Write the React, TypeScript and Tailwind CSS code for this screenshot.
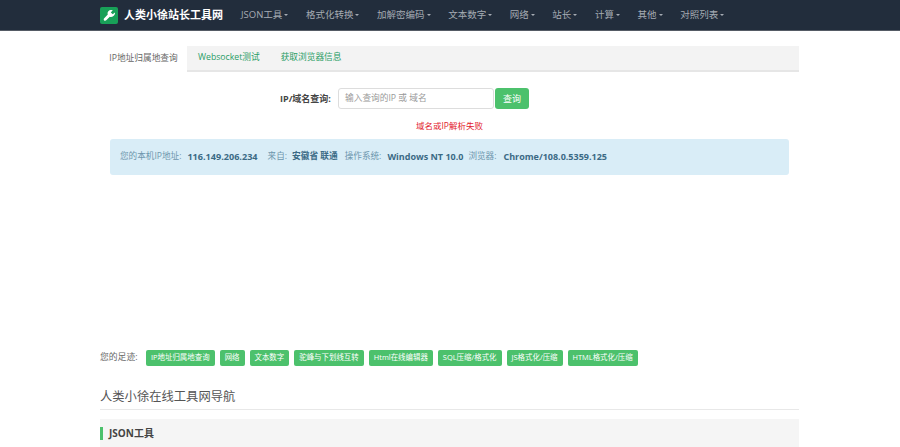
import React from "react";

const font = { fontFamily: '"Open Sans","Noto Sans CJK SC",sans-serif' };
const navItems = ["JSON工具", "格式化转换", "加解密编码", "文本数字", "网络", "站长", "计算", "其他", "对照列表"];
const crumbs = ["IP地址归属地查询", "网络", "文本数字", "驼峰与下划线互转", "Html在线编辑器", "SQL压缩/格式化", "JS格式化/压缩", "HTML格式化/压缩"];

export default function App() {
  return (
    <div style={font} className="h-[447px] w-[900px] overflow-hidden bg-white text-[#555]">
      <nav className="flex h-[31px] items-center border-b border-[#555b65] bg-[#222d3c] pl-[100px]">
        <div className="flex h-[17px] w-[18px] items-center justify-center rounded-[2px] bg-[#18a058]">
          <svg viewBox="0 0 16 16" className="h-[13px] w-[13px]" fill="white">
            <path d="M14.6 4.2 12 6.6 9.6 4.2 12 1.6C10 .8 7.8 1.3 6.6 2.8 5.6 4 5.4 5.5 5.9 6.9L1.5 11.4c-.8.8-.8 1.9-.1 2.6s1.9.7 2.6-.1L8.4 9.5c1.5.5 3.1.2 4.4-1 1.5-1.2 2.4-2.8 1.8-4.3Z" />
          </svg>
        </div>
        <span className="ml-[6px] w-[99px] text-[11px] font-bold whitespace-nowrap text-white">人类小徐站长工具网</span>
        <div className="ml-[18px] flex items-center gap-[17.6px]">
          {navItems.map((t) => (
            <span key={t} className="flex items-center text-[9.5px] whitespace-nowrap text-[#a5abb3]">
              {t}
              <span className="ml-[2px] h-0 w-0 border-x-[2px] border-t-[2px] border-x-transparent border-t-[#a5abb3]" />
            </span>
          ))}
        </div>
      </nav>

      <main className="mx-[100px] mt-[15px] w-[699px]">
        <div className="flex h-[26px] border-b-2 border-[#e6e6e6] bg-[#f3f3f3] text-[8.7px]">
          <span className="mb-[-2px] flex h-[26px] w-[87px] items-center justify-center bg-white whitespace-nowrap text-[#666]">IP地址归属地查询</span>
          <span className="ml-[11px] flex items-center whitespace-nowrap text-[#2a9d66]">Websocket测试</span>
          <span className="ml-[21px] flex items-center whitespace-nowrap text-[#2a9d66]">获取浏览器信息</span>
        </div>

        <div className="mt-[16px] flex h-[21px] items-center">
          <label className="ml-[180px] w-[50px] text-[9px] font-bold whitespace-nowrap text-[#444]">IP/域名查询:</label>
          <div className="ml-[8px] flex h-[21px] w-[156px] items-center rounded-[3px] border border-[#ddd] pl-[6px] text-[8.7px] whitespace-nowrap text-[#999]">
            输入查询的IP 或 域名
          </div>
          <button className="ml-[1px] h-[21px] w-[34px] rounded-[3px] bg-[#4cc16c] text-[9px] text-white">查询</button>
        </div>

        <p className="mt-[11px] ml-[316px] text-[8.5px] leading-[12px] whitespace-nowrap text-[#e2202c]">域名或IP解析失败</p>

        <div className="mx-[10px] mt-[7px] flex h-[36px] w-[679px] items-center rounded-[3px] bg-[#d9edf7] pb-[1px] pl-[10px] text-[8.6px] whitespace-nowrap text-[#6d96ad]">
          <span>您的本机IP地址:</span>
          <b className="ml-[6px] text-[9.1px] text-[#3b6a85]">116.149.206.234</b>
          <span className="ml-[10px]">来自:</span>
          <b className="ml-[5px] text-[8.7px] text-[#3b6a85]">安徽省 联通</b>
          <span className="ml-[7px]">操作系统:</span>
          <b className="ml-[6px] text-[9px] text-[#3b6a85]">Windows NT 10.0</b>
          <span className="ml-[5px]">浏览器:</span>
          <b className="ml-[7px] text-[9px] text-[#3b6a85]">Chrome/108.0.5359.125</b>
        </div>

        <div className="mt-[175px] flex h-[16px] items-center">
          <span className="mr-[8px] w-[38px] text-[8.8px] whitespace-nowrap text-[#666]">您的足迹:</span>
          <div className="flex gap-[5px]">
            {crumbs.map((c) => (
              <span key={c} className="flex h-[16px] items-center rounded-[2px] bg-[#4cc16c] px-[5px] text-[7.45px] whitespace-nowrap text-white">
                {c}
              </span>
            ))}
          </div>
        </div>

        <h2 className="mt-[20px] h-[24px] border-b border-[#e8e8e8] text-[12.3px] leading-[22px] font-normal text-[#555]">人类小徐在线工具网导航</h2>

        <div className="mt-[9px] flex h-[28px] items-center bg-[#f5f5f5]">
          <span className="h-[13px] w-[3px] bg-[#4cc16c]" />
          <span className="ml-[6px] text-[10px] font-bold text-[#444]">JSON工具</span>
        </div>
      </main>
    </div>
  );
}
